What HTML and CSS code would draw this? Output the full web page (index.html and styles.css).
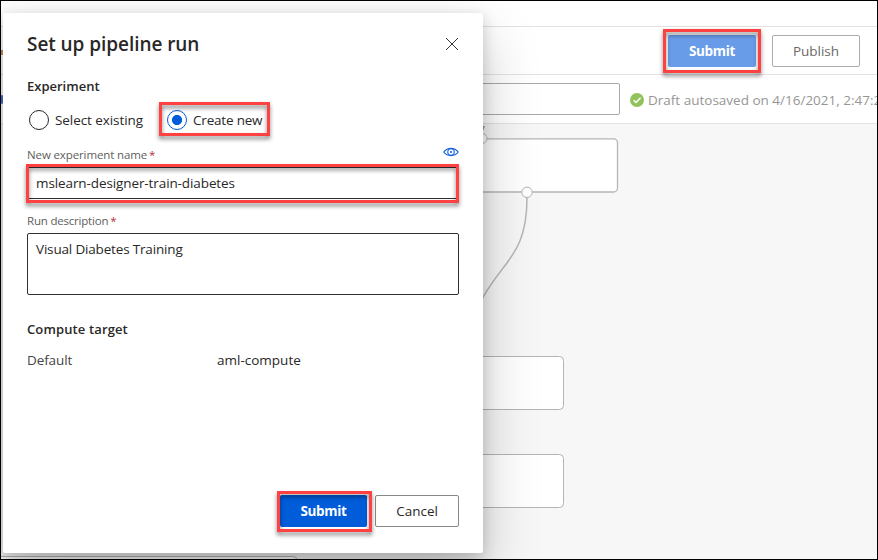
FILE: index.html
```html
<!DOCTYPE html>
<html lang="en">
<head>
<meta charset="utf-8">
<title>Set up pipeline run</title>
<link rel="stylesheet" href="styles.css">
</head>
<body>
<div class="app">
  <div class="topbar"></div>
  <header class="commands">
    <span class="mark"><button class="btn primary muted"><span class="t-sub">Submit</span></button></span>
    <button class="btn publish"><span class="t-pub">Publish</span></button>
  </header>
  <div class="draftbar">
    <div class="draft-name"></div>
    <svg class="check" width="14" height="14" viewBox="0 0 14 14"><circle cx="7" cy="7" r="7" fill="#92c25c"/><path d="M3.6 7.2 6 9.5 10.6 4.8" fill="none" stroke="#fff" stroke-width="1.5"/></svg>
    <span class="t-draft">Draft autosaved on 4/16/2021, 2:47:2</span>
  </div>
  <main class="canvas">
    <svg class="graph" width="876" height="435" viewBox="1 124 876 435">
      <g fill="#fff" stroke="#b5b5b5">
        <rect x="300.500" y="138.800" width="317" height="53.200" rx="4" stroke-width="1.300"/>
        <rect x="250.500" y="356.500" width="313" height="53" rx="4"/>
        <rect x="250.500" y="454.500" width="313" height="53" rx="4"/>
        <rect x="-10" y="556.500" width="307" height="53" rx="4"/>
        <path d="M527 197C527 255 504 259 482 299" fill="none" stroke-width="1.500"/>
        <circle cx="482" cy="138.500" r="5"/>
        <circle cx="527" cy="192.300" r="5.200"/>
      </g>
      <path d="M480 126h5l-2 5z" fill="#999"/>
    </svg>
  </main>

  <section class="dialog">
    <div class="title-row">
      <h1><span class="t-title">Set up pipeline run</span></h1>
      <svg width="14" height="14" viewBox="0 0 14 14"><path d="M1 1 13 13M13 1 1 13" stroke="#333" stroke-width="1"/></svg>
    </div>
    <h2 class="h-exp"><span class="t-exp">Experiment</span></h2>
    <div class="radios">
      <label class="radio"><i></i><span class="t-sel">Select existing</span></label>
      <label class="radio on mark"><i></i><span class="t-new">Create new</span></label>
    </div>
    <div class="label name-label">
      <span><span class="t-name">New experiment name</span> <b>*</b></span>
      <svg width="16" height="10" viewBox="0 0 16 10" fill="none" stroke="#1562dc"><path d="M.8 5C4.400 .2 11.600 .2 15.200 5 11.600 9.800 4.400 9.800 .8 5z" stroke-width="1.200"/><circle cx="8" cy="5" r="3.200" stroke-width="1.100"/><circle cx="8" cy="5" r="1" fill="#1562dc" stroke="none"/></svg>
    </div>
    <div class="field mark"><span class="t-ms">mslearn-designer-train-diabetes</span></div>
    <div class="label desc-label"><span><span class="t-desc">Run description</span> <b>*</b></span></div>
    <div class="area"><span class="t-vis">Visual Diabetes Training</span></div>
    <h2 class="h-target"><span class="t-target">Compute target</span></h2>
    <div class="target"><span class="key"><span class="t-def">Default</span></span><span class="t-aml">aml-compute</span></div>
    <footer>
      <span class="mark"><button class="btn primary"><span class="t-sub">Submit</span></button></span>
      <button class="btn cancel"><span class="t-can">Cancel</span></button>
    </footer>
  </section>
  <i class="sliver orange"></i><i class="sliver blue"></i>
</div>
</body>
</html>
```
FILE: styles.css
```css
* { box-sizing: border-box; }
body { margin: 0; font: 13.5px/20px "Open Sans", "Noto Sans", sans-serif; color: #292827; }
.app { position: relative; width: 878px; height: 560px; border: 1px solid #000; overflow: hidden; background: #fff; display: flex; flex-direction: column; }
.topbar { height: 26px; border-bottom: 1px solid #e3e3e3; }
.commands { height: 48px; border-bottom: 1px solid #e3e3e3; display: flex; justify-content: flex-end; align-items: center; gap: 16px; padding: 0 17px 0 0; }
.draftbar { height: 49px; border-bottom: 1px solid #e3e3e3; display: flex; align-items: center; color: #979695; }
.draft-name { width: 319px; height: 32px; margin-left: 300px; border: 1px solid #aaa; border-radius: 2px; flex: none; }
.check { margin: 0 4px 0 10px; flex: none; position: relative; top: 1px; }
.draftbar span { white-space: nowrap; position: relative; top: 1px; }
.canvas { flex: 1; background: #f7f7f7; min-height: 0; }
.graph { display: block; }

.btn { font: inherit; height: 32px; padding: 0; border: 1px solid #8a8886; border-radius: 2px; background: #fff; color: #292827; display: flex; align-items: center; justify-content: center; }
.primary { width: 88px; border: 0; background: #015cda; color: #fff; font-weight: 700; }
.muted { background: #689ce8; }
.publish { width: 88px; border-color: #adacab; color: #696867; }
.cancel { width: 84px; }

.dialog { position: absolute; left: 2px; top: 12px; width: 480px; height: 540px; padding: 18px 24px 26px; background: #fff; border-radius: 2px; box-shadow: 0 25.6px 57.6px rgba(0,0,0,.22), 0 4.8px 14.4px rgba(0,0,0,.18); display: flex; flex-direction: column; }
.title-row { height: 26px; display: flex; align-items: center; justify-content: space-between; }
h1, h2 { margin: 0; font-weight: 600; }
h1 { font-size: 19px; line-height: 26px; }
h2 { font-size: 13px; line-height: 20px; }
.h-exp { margin-top: 19px; }
.radios { display: flex; gap: 24px; height: 20px; margin: 14px 0 0 2px; }
.radio { display: flex; align-items: center; gap: 6px; }
.radio i { width: 20px; height: 20px; border: 1px solid #292827; border-radius: 50%; }
.radio.on i { border-color: #015cda; background: radial-gradient(circle, #015cda 4.700px, #fff 5.400px); }
.label { font-size: 11.5px; line-height: 16px; color: #605e5c; display: flex; justify-content: space-between; }
.label b { color: #b5303a; font-weight: 400; margin-left: -1px; }
.name-label { margin-top: 17px; }
.field { height: 32px; margin-top: 4px; padding: 5px 8px; border: 1px solid #323130; border-radius: 2px; }
.desc-label { margin-top: 14px; }
.area { height: 62px; margin-top: 4px; padding: 5px 8px; border: 1px solid #323130; border-radius: 2px; }
.h-target { margin-top: 24px; }
.target { display: flex; margin-top: 11px; }
.key { width: 190px; color: #484644; }
footer { margin-top: auto; display: flex; justify-content: flex-end; gap: 8px; }
footer .primary { width: 87px; }

/* highlight frames */
.mark { position: relative; }
.mark::after { content: ""; position: absolute; border: 3px solid #ff4141; filter: drop-shadow(0 3px 2px rgba(0,0,0,.5)); inset: -6px -5px; }
.radio.mark::after { inset: -8px -8px -6px; }
.field.mark::after { inset: -4px -1px -5px -2px; }
footer .mark::after { inset: -4px -5px -5px -3px; }

/* text fitting */
[class^="t-"] { white-space: nowrap; }
.t-title { letter-spacing: -.06px; }
.t-sel { letter-spacing: -.07px; }
.t-new { letter-spacing: -.2px; }
.t-name { letter-spacing: -.12px; }
.t-desc { letter-spacing: -.2px; }
.t-ms { letter-spacing: -.1px; }
.t-vis { letter-spacing: -.17px; }
.t-target { letter-spacing: .13px; }
.t-def { letter-spacing: -.1px; }
.t-sub { letter-spacing: -.35px; }

.sliver { position: absolute; left: 0; width: 2px; }
.orange { top: 49px; height: 5px; background: #a8794e; }
.blue { top: 94px; height: 9px; background: #335cad; border-radius: 1px; }
```
